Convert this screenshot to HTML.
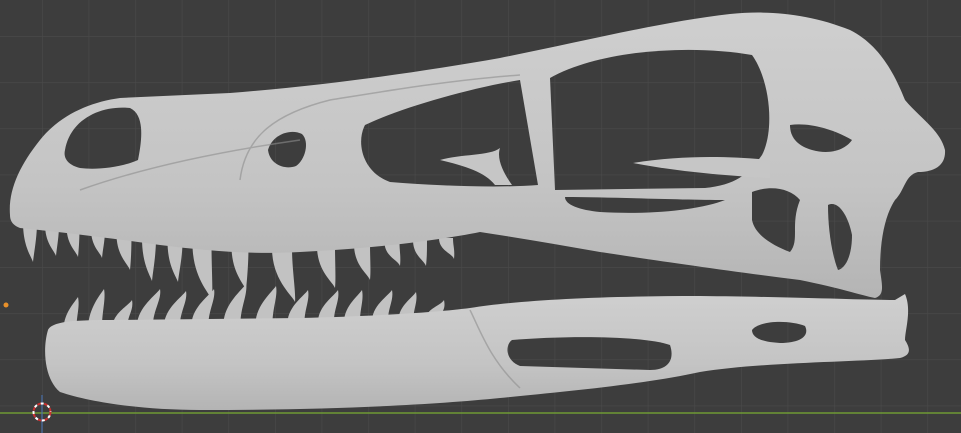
<!DOCTYPE html>
<html><head><meta charset="utf-8"><style>
html,body{margin:0;padding:0;background:#3d3d3d;width:961px;height:433px;overflow:hidden}
svg{display:block}
</style></head><body>
<svg id="s" width="961" height="433" viewBox="0 0 961 433" xmlns="http://www.w3.org/2000/svg">
<defs>
<pattern id="grid" x="42" y="36" width="46.6" height="46.2" patternUnits="userSpaceOnUse">
<rect width="46.6" height="46.2" fill="#3d3d3d"/>
<path d="M0 0H46.6M0 0V46.2" stroke="#4a4a4a" stroke-width="1.2" fill="none"/>
</pattern>
<linearGradient id="bone" x1="0" y1="0" x2="0" y2="1">
<stop offset="0" stop-color="#cfcfcf"/><stop offset="0.6" stop-color="#c4c4c4"/><stop offset="1" stop-color="#b4b4b4"/>
</linearGradient>
</defs>
<rect width="961" height="433" fill="url(#grid)"/>
<line x1="0" y1="413" x2="961" y2="413" stroke="#6e9a34" stroke-width="1.6"/>
<line x1="42" y1="395" x2="42" y2="433" stroke="#4a6fa8" stroke-width="1.2"/>
<g id="teeth" fill="#c2c2c2"></g>
<path fill="url(#bone)" d="M10,215 C8,190 20,165 40,140 C60,115 90,102 120,98 L230,93 C330,85 420,72 500,58 C580,42 660,22 730,14 C770,10 810,14 850,30 C880,45 895,75 905,100 C920,118 940,130 945,150 C946,165 935,172 918,172 C905,175 905,190 895,200 C885,215 880,240 880,270 C882,285 885,295 875,298 C860,295 840,288 800,280 C720,270 640,258 600,252 C560,245 520,238 480,232 C440,240 380,248 300,252 C250,255 200,250 160,245 C110,238 60,232 20,228 C12,225 10,220 10,215Z"/>
<path fill="url(#bone)" d="M48,330 C52,322 70,320 110,320 L300,318 C380,316 440,312 470,308 C520,300 600,296 700,296 C800,297 860,300 895,300 L905,294 C912,310 905,330 905,340 C910,348 912,355 900,358 C860,362 760,362 700,372 C640,385 560,392 500,398 C430,405 330,410 200,410 C140,410 90,402 60,392 C45,380 42,350 48,330Z"/>
<g fill="url(#grid)">
<path d="M65,150 C70,120 100,105 130,108 C145,115 142,140 138,160 C120,168 95,170 80,168 C68,165 63,158 65,150Z"/>
<path d="M268,150 C272,135 290,128 302,134 C310,142 305,160 296,166 C285,170 270,165 268,150Z"/>
<path d="M365,125 C400,108 470,88 520,80 L538,185 C500,188 440,186 390,182 C362,172 356,142 365,125Z"/>
<path d="M550,78 C600,50 690,44 752,55 C770,80 775,130 762,155 C748,175 735,185 705,188 L555,190 Z"/>
<path d="M565,197 C610,197 680,200 725,200 C700,210 650,215 600,212 C580,210 565,205 565,197Z"/>
<path d="M752,192 C770,185 790,188 800,200 C790,225 800,240 790,252 C772,245 755,235 752,220Z"/>
<path d="M828,205 C838,200 848,215 852,235 C852,255 846,268 838,270 C832,255 828,230 828,205Z"/>
<path d="M790,125 C810,122 835,130 852,140 C845,150 830,155 812,150 C798,146 790,138 790,125Z"/>
<path d="M512,340 C560,336 640,335 670,345 C675,360 668,370 650,370 L520,366 C505,360 505,345 512,340Z"/>
<path d="M752,330 C760,320 790,320 805,326 C810,336 800,343 780,343 C762,342 752,338 752,330Z"/>
</g>
<path fill="#c6c6c6" d="M440,160 C460,154 490,156 500,148 C496,160 505,175 512,185 L495,185 C485,172 465,166 440,160Z"/>
<path fill="#c6c6c6" d="M633,163 C680,155 730,156 770,160 L770,178 C730,176 680,172 633,163Z"/>
<g fill="none" stroke="#8e8e8e" stroke-width="1.5" opacity="0.6">
<path d="M80,190 C150,165 230,150 300,140"/>
<path d="M240,180 C245,140 270,115 330,100 C380,92 450,80 520,75"/>
<path d="M470,310 C480,330 490,360 520,388"/>
</g>
<circle cx="42" cy="412" r="8.5" fill="none" stroke="#c83030" stroke-width="2" stroke-dasharray="4 3"/>
<circle cx="42" cy="412" r="8.5" fill="none" stroke="#ffffff" stroke-width="2" stroke-dasharray="3 4" stroke-dashoffset="3.5"/>
<circle cx="6" cy="305" r="2.5" fill="#e8902a"/>
</svg>
<script>
var g=document.getElementById('teeth'),h='';
var up=[[30,222,14,33,262],[52,224,14,56,256],[73,226,13,78,257],[98,229,14,102,258],[124,234,15,130,270],[149,238,14,152,281],[175,241,15,178,282],[202,244,19,212,300],[240,246,17,246,290],[282,248,20,295,302],[326,246,18,335,288],[362,244,16,370,280],[392,242,15,400,266],[420,240,14,426,266],[446,238,14,454,259]];
up.forEach(function(t){var b=t[0],y=t[1],w=t[2],tx=t[3],ty=t[4];
h+='<path d="M'+(b-w/2)+','+y+' C'+(b-w/2)+','+(y+(ty-y)*0.6)+' '+(tx-2)+','+(ty-6)+' '+tx+','+ty+' C'+(tx+1)+','+(ty-10)+' '+(b+w/2)+','+(y+(ty-y)*0.4)+' '+(b+w/2)+','+y+'Z"/>';});
var lo=[[70,328,13,78,297],[95,327,14,104,289],[120,326,15,132,300],[145,325,16,160,289],[172,325,16,186,291],[200,324,17,214,289],[232,323,17,246,284],[264,323,17,276,286],[296,322,17,308,290],[326,321,16,338,290],[352,321,16,362,290],[380,320,16,392,290],[406,319,15,416,292],[434,317,15,444,300]];
lo.forEach(function(t){var b=t[0],y=t[1],w=t[2],tx=t[3],ty=t[4];
h+='<path d="M'+(b-w/2)+','+y+' C'+(b-w/2+1)+','+(y+(ty-y)*0.5)+' '+(tx-4)+','+(ty+6)+' '+tx+','+ty+' C'+(tx+2)+','+(ty+10)+' '+(b+w/2)+','+(y+(ty-y)*0.4)+' '+(b+w/2)+','+y+'Z"/>';});
g.innerHTML=h;
</script>
</body></html>
